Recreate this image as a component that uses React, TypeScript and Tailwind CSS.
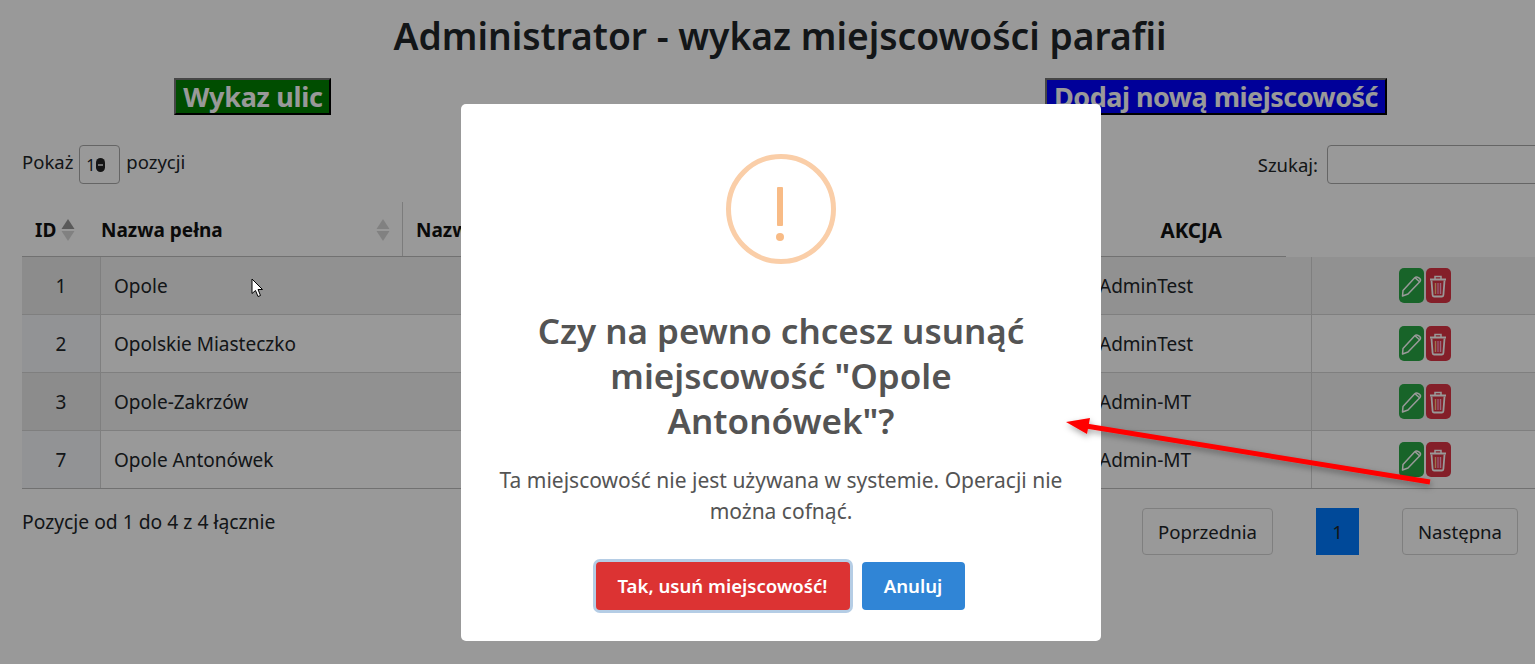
import React from "react";

const sans = { fontFamily: '"Noto Sans", "Open Sans", sans-serif' };

function Sort({ dark }: { dark?: boolean }) {
  return (
    <svg width="14" height="24" viewBox="0 0 14 24" className="shrink-0">
      <path d="M7 1 L13.5 11 H0.5 Z" fill={dark ? "#959595" : "#d8d8d8"} />
      <path d="M7 23 L13.5 13 H0.5 Z" fill="#d8d8d8" />
    </svg>
  );
}

function Pencil() {
  return (
    <svg width="24" height="24" viewBox="0 0 24 24" fill="none" stroke="#ffffff" strokeWidth="1.5" strokeLinejoin="round">
      <path d="M4 16.5 L15.5 4 C16.5 3 18 2.8 19.5 3.6 L20.8 4.6 C21.6 5.4 21.6 6.8 20.8 7.8 L9 20 L3.5 22 Z" />
      <path d="M16 3.6 L20.8 8" />
    </svg>
  );
}

function Trash() {
  return (
    <svg width="20" height="24" viewBox="0 0 20 24" fill="none">
      <path d="M2 5.5 H18" stroke="#fff" strokeWidth="2" />
      <path d="M7 5 V2.5 H13 V5" stroke="#fff" strokeWidth="1.5" />
      <path d="M3.5 6.5 L4.6 21 Q4.7 22.5 6 22.5 H14 Q15.3 22.5 15.4 21 L16.5 6.5" stroke="#fff" strokeWidth="1.8" />
      <path d="M7.5 9 V20" stroke="#ffc080" strokeWidth="1.4" />
      <path d="M10 9 V20" stroke="#ff90c0" strokeWidth="1.4" />
      <path d="M12.5 9 V20" stroke="#ffb0d0" strokeWidth="1.4" />
    </svg>
  );
}

const rows = [
  { id: 1, name: "Opole", by: "AdminTest", striped: true },
  { id: 2, name: "Opolskie Miasteczko", by: "AdminTest", striped: false },
  { id: 3, name: "Opole-Zakrzów", by: "Admin-MT", striped: true },
  { id: 7, name: "Opole Antonówek", by: "Admin-MT", striped: false },
];

export default function App() {
  return (
    <div className="relative h-[664px] w-full overflow-hidden bg-white text-[#212529]" style={sans}>
      <div className="flex flex-col">
        <h1 className="h-[78px] w-[1560px] pt-[7px] text-center text-[37.2px] font-semibold leading-[58px]">
          Administrator - wykaz miejscowości parafii
        </h1>
        <div className="flex h-[38px] items-start pl-[174px]">
          <a className="flex h-[37px] w-[157px] items-center justify-center border-2 border-t-[#767676] border-l-[#767676] border-r-black border-b-black bg-[#008000] pl-[1px] text-[27px] font-bold leading-none tracking-[-0.3px] text-white">
            Wykaz ulic
          </a>
          <a className="ml-[714px] flex h-[37px] w-[342px] items-center justify-center border-2 border-t-[#767676] border-l-[#767676] border-r-black border-b-black bg-[#0000ff] text-[27px] font-bold leading-none tracking-[-0.5px] text-white">
            Dodaj nową miejscowość
          </a>
        </div>

        <div className="mt-[29px] flex h-[39px] w-[1560px] items-center pl-[22px] text-[18.5px]">
          <span className="-mt-[6px]">Pokaż</span>
          <span className="ml-[6px] flex h-[39px] w-[41px] items-center rounded-[4px] border border-[#a9a9a9] pl-[6px] text-[16px]">
            1
            <span className="flex h-[14px] w-[9px] items-center justify-center rounded-full bg-[#222]">
              <span className="h-[2px] w-[5px] bg-[#bbb]" />
            </span>
          </span>
          <span className="-mt-[6px] ml-[6px]">pozycji</span>
          <span className="ml-auto">Szukaj:</span>
          <span className="ml-[9px] h-[39px] w-[233px] rounded-[4px] border border-[#a9a9a9]" />
        </div>

        <div className="mt-[18px] ml-[22px] flex h-[55px] w-[1264px] border-b border-[#bcbcbc] pt-[2px] text-[19px] font-bold text-[#111]">
          <div className="flex w-[68px] items-center justify-between pl-[13px] pr-[15px]">
            ID
            <Sort dark />
          </div>
          <div className="-mt-[2px] flex w-[313px] items-center justify-between border-r border-[#cfcfcf] pl-[11px] pr-[12px] pt-[2px]">
            Nazwa pełna
            <Sort />
          </div>
          <div className="flex w-[400px] items-center pl-[13px]">Nazwa</div>
          <div className="flex flex-1 items-center justify-end pr-[64px] text-[20.5px]">AKCJA</div>
        </div>

        <div className="ml-[22px] w-[1540px] text-[19px]">
          {rows.map((r) => (
            <div
              key={r.id}
              className={`flex h-[58px] items-stretch border-b border-[#d4d4d4] last:border-[#bcbcbc] ${r.striped ? "bg-[#f2f2f2]" : "bg-white"}`}
            >
              <div className={`flex w-[79px] items-center justify-center border-r border-[#d4d4d4] pt-[2px] ${r.striped ? "bg-[#eaeaea]" : "bg-[#f3f6f9]"}`}>
                {r.id}
              </div>
              <div className="flex w-[985px] items-center pl-[13px] pt-[2px]">{r.name}</div>
              <div className="flex w-[226px] items-center border-r border-[#d4d4d4] pl-[13px] pt-[2px]">{r.by}</div>
              <div className="flex w-[225px] items-center justify-center gap-[2px]">
                <span className="flex h-[35px] w-[25px] items-center justify-center rounded-[5px] bg-[#28a745]">
                  <Pencil />
                </span>
                <span className="flex h-[35px] w-[25px] items-center justify-center rounded-[5px] bg-[#dc3545]">
                  <Trash />
                </span>
              </div>
            </div>
          ))}
        </div>

        <div className="flex h-[76px] w-[1535px] items-start pl-[22px] pr-[17px] text-[18.6px]">
          <span className="mt-[19px] text-[19.3px]">Pozycje od 1 do 4 z 4 łącznie</span>
          <div className="ml-auto mt-[19px] flex items-stretch">
            <span className="flex h-[47px] w-[131px] items-center justify-center rounded-[4px] border border-[#d4d4d4]">Poprzednia</span>
            <span className="ml-[43px] flex h-[47px] w-[43px] items-center justify-center bg-[#007bff]">1</span>
            <span className="ml-[43px] flex h-[47px] w-[116px] items-center justify-center rounded-[4px] border border-[#d4d4d4]">Następna</span>
          </div>
        </div>
      </div>

      {/* overlay */}
      <div className="absolute inset-0 bg-black/40" />

      {/* cursor */}
      <svg className="absolute left-[251px] top-[278px]" width="14" height="20" viewBox="0 0 14 20">
        <path d="M1 1 V15.5 L4.5 12.5 L7 18.5 L9.5 17.5 L7 11.5 H11.5 Z" fill="#fff" stroke="#000" strokeWidth="1" />
      </svg>

      {/* modal */}
      <div className="absolute left-[461px] top-[104px] flex h-[537px] w-[640px] flex-col items-center rounded-[5px] bg-white px-[20px] pt-[50px] text-[#545454]">
        <svg width="110" height="110" viewBox="0 0 110 110" className="shrink-0">
          <circle cx="55" cy="55" r="52.5" fill="none" stroke="#facea8" strokeWidth="5" />
          <rect x="51" y="33" width="6" height="39" rx="1" fill="#f8bb86" />
          <circle cx="54" cy="83" r="4" fill="#f8bb86" />
        </svg>
        <h2 className="mt-[44px] w-[540px] text-center text-[35px] font-semibold leading-[45px]">
          Czy na pewno chcesz usunąć miejscowość "Opole Antonówek"?
        </h2>
        <p className="mt-[22px] w-[590px] text-center text-[21px] leading-[31px]">
          Ta miejscowość nie jest używana w systemie. Operacji nie można cofnąć.
        </p>
        <div className="mr-[2px] mt-[35px] flex items-center gap-[12px]">
          <button className="h-[48px] w-[254px] rounded-[4px] bg-[#dc3333] text-[18.6px] font-semibold text-white shadow-[0_0_0_3px_#b5cde5]">
            Tak, usuń miejscowość!
          </button>
          <button className="h-[48px] w-[103px] rounded-[4px] bg-[#3085d6] text-[18.6px] font-semibold text-white">
            Anuluj
          </button>
        </div>
      </div>

      {/* annotation arrow */}
      <svg className="absolute inset-0" width="1535" height="664" viewBox="0 0 1535 664">
        <defs>
          <filter id="s2" x="-5%" y="-50%" width="110%" height="220%">
            <feDropShadow dx="1" dy="3" stdDeviation="3" floodColor="#000" floodOpacity="0.35" />
          </filter>
        </defs>
        <g filter="url(#s2)">
          <path d="M1430 482 L1086 426" stroke="#ff0000" strokeWidth="5" />
          <path d="M1066 422 L1090 418 L1087 434 Z" fill="#ff0000" />
        </g>
      </svg>
    </div>
  );
}
